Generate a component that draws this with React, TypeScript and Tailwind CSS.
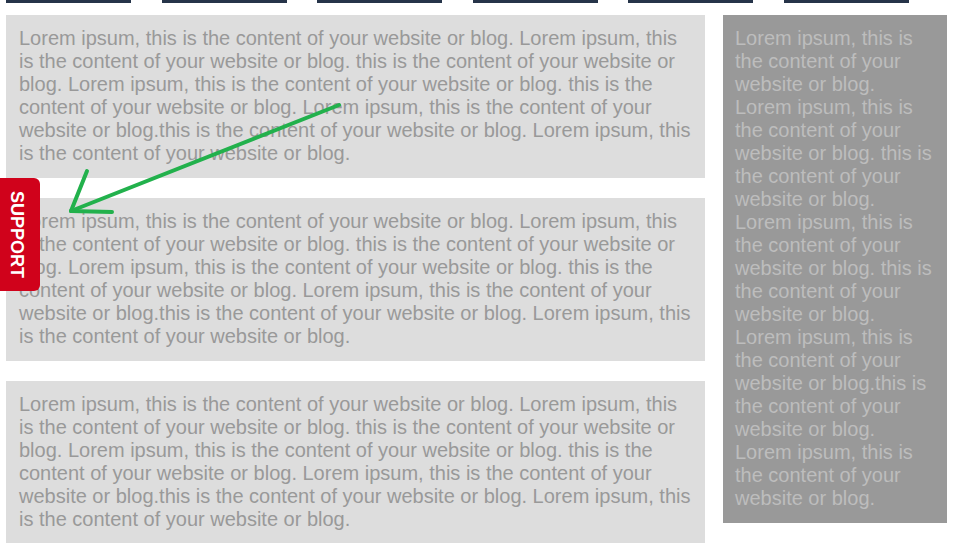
const lorem =
    "Lorem ipsum, this is the content of your website or blog. Lorem ipsum, this is the content of your website or blog. this is the content of your website or blog. Lorem ipsum, this is the content of your website or blog. this is the content of your website or blog. Lorem ipsum, this is the content of your website or blog.this is the content of your website or blog. Lorem ipsum, this is the content of your website or blog.";

const navItems = [1, 2, 3, 4, 5, 6];

function App() {
    return (
        <div className="relative w-[959px] h-[543px] overflow-hidden bg-white font-['Liberation_Sans',Arial,sans-serif] text-[20px] leading-[23px]">
            <nav className="flex gap-[30.6px] pl-[6px]">
                {navItems.map((n) => (
                    <div key={n} className="w-[125px] h-[3px] bg-[#263449]"></div>
                ))}
            </nav>

            <div className="flex gap-[18px] pl-[6px] mt-[12px]">
                <div className="w-[699px] flex flex-col gap-[20px]">
                    {[1, 2, 3].map((n) => (
                        <div key={n} className="bg-[#dddddd] text-[#999999] pl-[13px] pr-[13px] pt-[12px] pb-[13px]">
                            {lorem}
                        </div>
                    ))}
                </div>

                <aside className="w-[224px] self-start bg-[#999999] text-[#bdbdbd] px-[12px] pt-[12px] pb-[13px]">
                    {lorem}
                </aside>
            </div>

            <div className="absolute left-0 top-[178px] w-[40px] h-[113px] bg-[#d0021b] rounded-r-[6px] flex items-center justify-center pr-[6px]">
                <span className="[writing-mode:vertical-rl] text-white font-bold text-[18px] leading-none">SUPPORT</span>
            </div>

            <svg className="absolute left-0 top-0 pointer-events-none" width="959" height="543" viewBox="0 0 959 543">
                <g stroke="#22b14c" strokeWidth="4" strokeLinecap="round" fill="none">
                    <line x1="339" y1="105" x2="71" y2="211" />
                    <line x1="87" y1="171" x2="71" y2="211" />
                    <line x1="71" y1="211" x2="112" y2="212" />
                </g>
            </svg>
        </div>
    );
}

export default App;
